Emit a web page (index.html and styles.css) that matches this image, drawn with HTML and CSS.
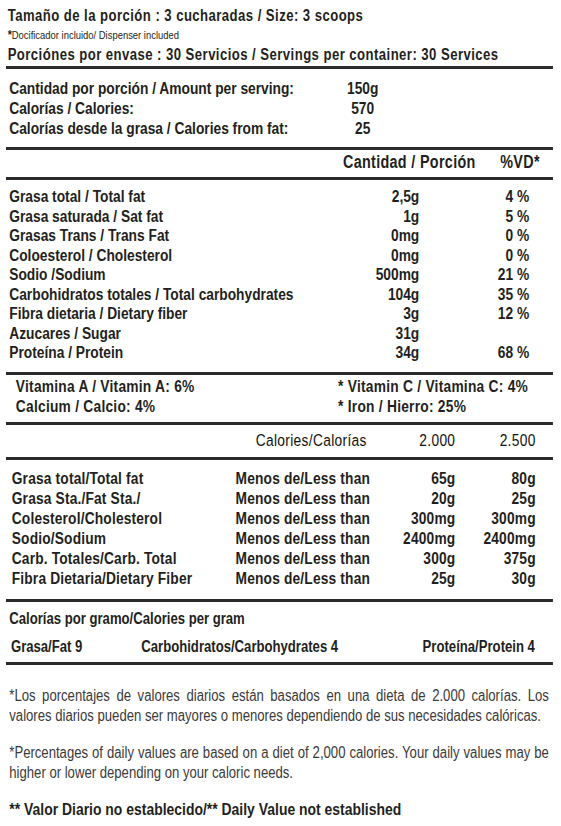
FILE: index.html
```html
<!DOCTYPE html>
<html lang="es">
<head>
  <meta charset="UTF-8">
  <title>Tabla Nutricional</title>
  <link rel="stylesheet" href="styles.css">
</head>
<body>
  <div class="sheet">
  <div class="label">
    <section class="serving">
      <p class="line">Tamaño de la porción : 3 cucharadas / Size: 3 scoops</p>
      <p class="note"><span class="star">*</span>Docificador incluido/ Dispenser included</p>
      <p class="line">Porciónes por envase : 30 Servicios / Servings per container: 30 Services</p>
    </section>
    <div class="rule"></div>

    <section class="amounts">
      <div class="row"><span>Cantidad por porción / Amount per serving:</span><span class="val">150g</span></div>
      <div class="row"><span>Calorías / Calories:</span><span class="val">570</span></div>
      <div class="row"><span>Calorías desde la grasa / Calories from fat:</span><span class="val">25</span></div>
    </section>
    <div class="rule"></div>

    <div class="nutrients-head">
      <span>Cantidad / Porción</span><span>%VD*</span>
    </div>
    <div class="rule"></div>

    <section class="nutrients">
      <span>Grasa total / Total fat</span><span class="num">2,5g</span><span class="num">4 %</span>
      <span>Grasa saturada / Sat fat</span><span class="num">1g</span><span class="num">5 %</span>
      <span>Grasas Trans / Trans Fat</span><span class="num">0mg</span><span class="num">0 %</span>
      <span>Coloesterol / Cholesterol</span><span class="num">0mg</span><span class="num">0 %</span>
      <span>Sodio /Sodium</span><span class="num">500mg</span><span class="num">21 %</span>
      <span>Carbohidratos totales / Total carbohydrates</span><span class="num">104g</span><span class="num">35 %</span>
      <span>Fibra dietaria / Dietary fiber</span><span class="num">3g</span><span class="num">12 %</span>
      <span>Azucares / Sugar</span><span class="num">31g</span><span class="num"></span>
      <span>Proteína / Protein</span><span class="num">34g</span><span class="num">68 %</span>
    </section>
    <div class="rule"></div>

    <section class="vitamins">
      <span>Vitamina A / Vitamin A: 6%</span><span>* Vitamin C / Vitamina C: 4%</span>
      <span>Calcium / Calcio: 4%</span><span>* Iron / Hierro: 25%</span>
    </section>
    <div class="rule"></div>

    <div class="daily head">
      <span></span><span class="num cal">Calories/Calorías</span><span class="num">2.000</span><span class="num">2.500</span>
    </div>
    <div class="rule"></div>

    <section class="daily body">
      <span>Grasa total/Total fat</span><span class="num">Menos de/Less than</span><span class="num">65g</span><span class="num">80g</span>
      <span>Grasa Sta./Fat Sta./</span><span class="num">Menos de/Less than</span><span class="num">20g</span><span class="num">25g</span>
      <span>Colesterol/Cholesterol</span><span class="num">Menos de/Less than</span><span class="num">300mg</span><span class="num">300mg</span>
      <span>Sodio/Sodium</span><span class="num">Menos de/Less than</span><span class="num">2400mg</span><span class="num">2400mg</span>
      <span>Carb. Totales/Carb. Total</span><span class="num">Menos de/Less than</span><span class="num">300g</span><span class="num">375g</span>
      <span>Fibra Dietaria/Dietary Fiber</span><span class="num">Menos de/Less than</span><span class="num">25g</span><span class="num">30g</span>
    </section>
    <div class="rule"></div>

    <section class="per-gram">
      <p class="title">Calorías por gramo/Calories per gram</p>
      <div class="items">
        <span>Grasa/Fat 9</span>
        <span>Carbohidratos/Carbohydrates 4</span>
        <span class="prot">Proteína/Protein 4</span>
      </div>
    </section>
    <div class="rule"></div>

    <section class="footnotes">
      <p>*Los porcentajes de valores diarios están basados en una dieta de 2.000 calorías. Los valores diarios pueden ser mayores o menores dependiendo de sus necesidades calóricas.</p>
      <p>*Percentages of daily values are based on a diet of 2,000 calories. Your daily values may be higher or lower depending on your caloric needs.</p>
      <p class="bold">** Valor Diario no establecido/** Daily Value not established</p>
    </section>
  </div>
  </div>
</body>
</html>
```

FILE: styles.css
```css
/* the label type is a condensed grotesque: the whole label is narrowed by 0.82 */
body {
  margin: 0;
  background: #fff;
  color: #231f20;
  font-family: "Liberation Sans", Arial, sans-serif;
  font-weight: bold;
  font-size: 16.8px;
}
p {
  margin: 0;
}
.sheet {
  width: 547px;
  margin-left: 6px;
  overflow: hidden;
}
.label {
  width: 667px;
  transform: scaleX(0.82);
  transform-origin: 0 0;
}
.rule {
  height: 3px;
  background: #2b2b2b;
}
.serving {
  padding: 6px 0 2px 2px;
}
.serving .line {
  line-height: 19px;
  font-size: 16px;
  letter-spacing: 0.55px;
}
.serving .note {
  font-size: 11.5px;
  font-weight: normal;
  line-height: 19px;
}
.serving .star {
  font-size: 13px;
  font-weight: bold;
}
.amounts {
  padding: 10px 0 8px 4px;
}
.amounts .row {
  display: grid;
  grid-template-columns: 401px 60px;
  line-height: 20px;
}
.amounts .val {
  text-align: center;
}
.nutrients-head {
  display: flex;
  justify-content: flex-end;
  gap: 30px;
  padding: 2px 16px 5px 0;
  line-height: 20px;
  font-size: 17.5px;
  letter-spacing: 0.4px;
}
.nutrients {
  display: grid;
  grid-template-columns: 1fr 100px 134px;
  padding: 7px 29px 9px 4px;
  line-height: 19.5px;
}
.num {
  text-align: right;
}
.vitamins {
  display: grid;
  grid-template-columns: 393px 1fr;
  padding: 2px 0 5px 12px;
  line-height: 20px;
  letter-spacing: 0.3px;
}
.daily {
  display: grid;
  grid-template-columns: 272px 165px 104px 98px;
  padding-left: 7px;
}
.daily.head {
  padding-top: 6px;
  padding-bottom: 6px;
  line-height: 20px;
  font-weight: normal;
  color: #111;
  letter-spacing: 0.4px;
}
.daily .cal {
  padding-right: 4px;
}
.daily.body {
  padding-top: 9px;
  padding-bottom: 10px;
  line-height: 20px;
  letter-spacing: 0.2px;
}
.per-gram {
  padding: 7px 0 5px 4px;
  font-size: 16px;
}
.per-gram .title {
  line-height: 20px;
}
.per-gram .items {
  display: grid;
  grid-template-columns: 159px 1fr auto;
  margin-top: 8px;
  padding: 0 22px 0 2px;
  line-height: 20px;
}
.footnotes {
  padding: 21px 5px 0 4px;
  font-weight: normal;
  font-size: 16px;
  color: #3a3a3a;
}
.footnotes p {
  line-height: 20.5px;
  text-align: justify;
  margin-bottom: 16px;
}
.footnotes p.bold {
  font-weight: bold;
  font-size: 17px;
  color: #231f20;
}
```
